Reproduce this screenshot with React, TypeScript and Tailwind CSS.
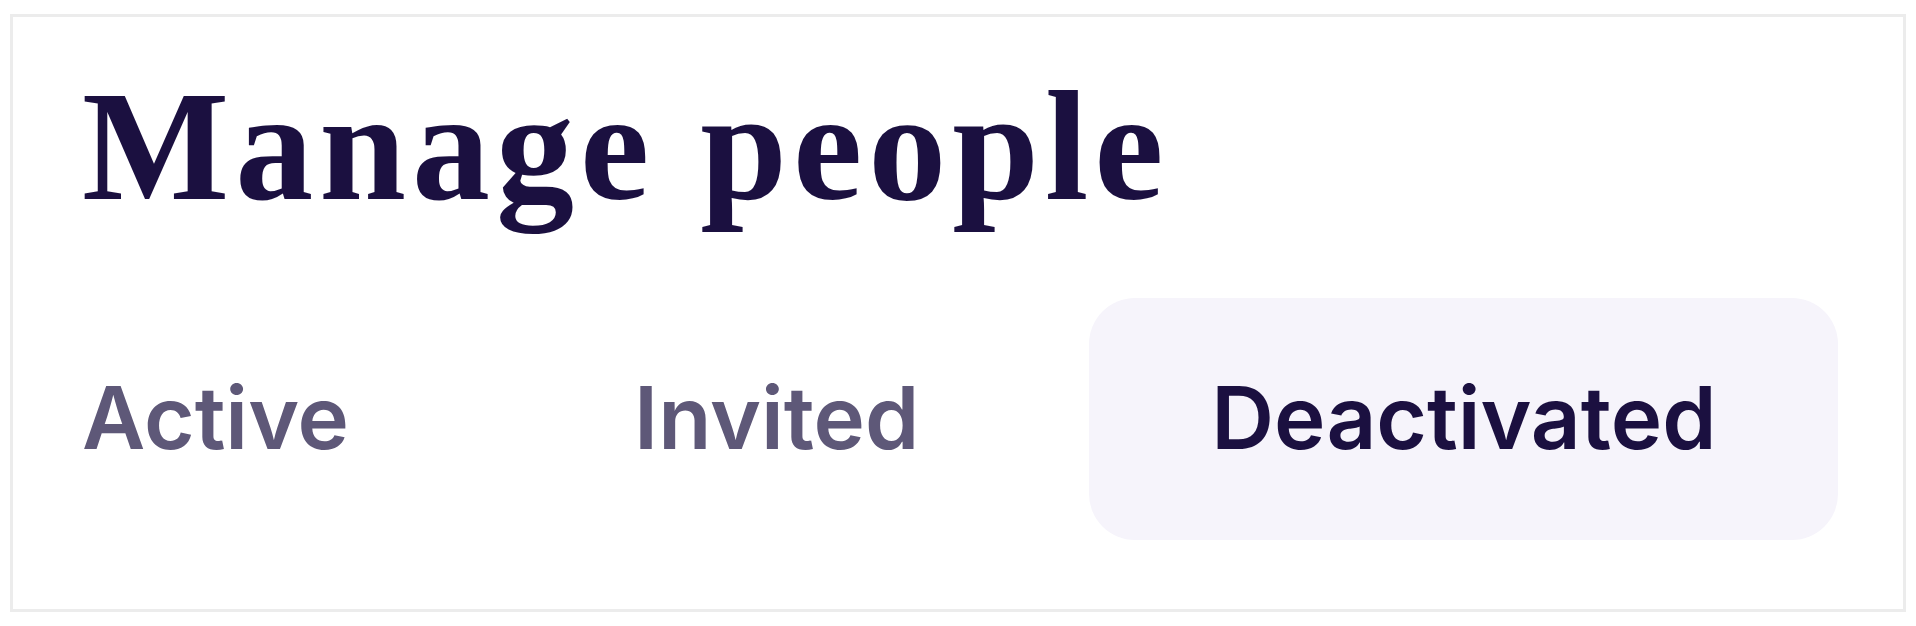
import React from 'react';

const tabs = [
  { label: 'Active', active: false },
  { label: 'Invited', active: false },
  { label: 'Deactivated', active: true },
];

export default function App() {
  return (
    <div className="h-[626px] w-[1916px] bg-white pl-[10px] pt-[14px]">
      <div className="h-[598px] w-[1896px] border-[3px] border-[#ececec] bg-white pl-[69px] pt-[52px]">
        <h1 className="font-['Liberation_Serif',serif] text-[156px] font-bold leading-none tracking-[6px] text-[#1b1040]">
          Manage people
        </h1>

        <div className="mt-[73px] flex items-center font-['Inter',sans-serif] text-[87px] font-semibold leading-none">
          {tabs.map((tab, i) => (
            <button
              key={tab.label}
              className={
                tab.active
                  ? 'ml-[170px] flex h-[242px] w-[749px] items-center justify-center rounded-[46px] bg-[#f6f4fb] pb-[4px] text-[#1b1040]'
                  : i === 0
                    ? 'pb-[4px] text-[#5e5878]'
                    : 'ml-[285px] pb-[4px] text-[#5e5878]'
              }
            >
              {tab.label}
            </button>
          ))}
        </div>
      </div>
    </div>
  );
}
